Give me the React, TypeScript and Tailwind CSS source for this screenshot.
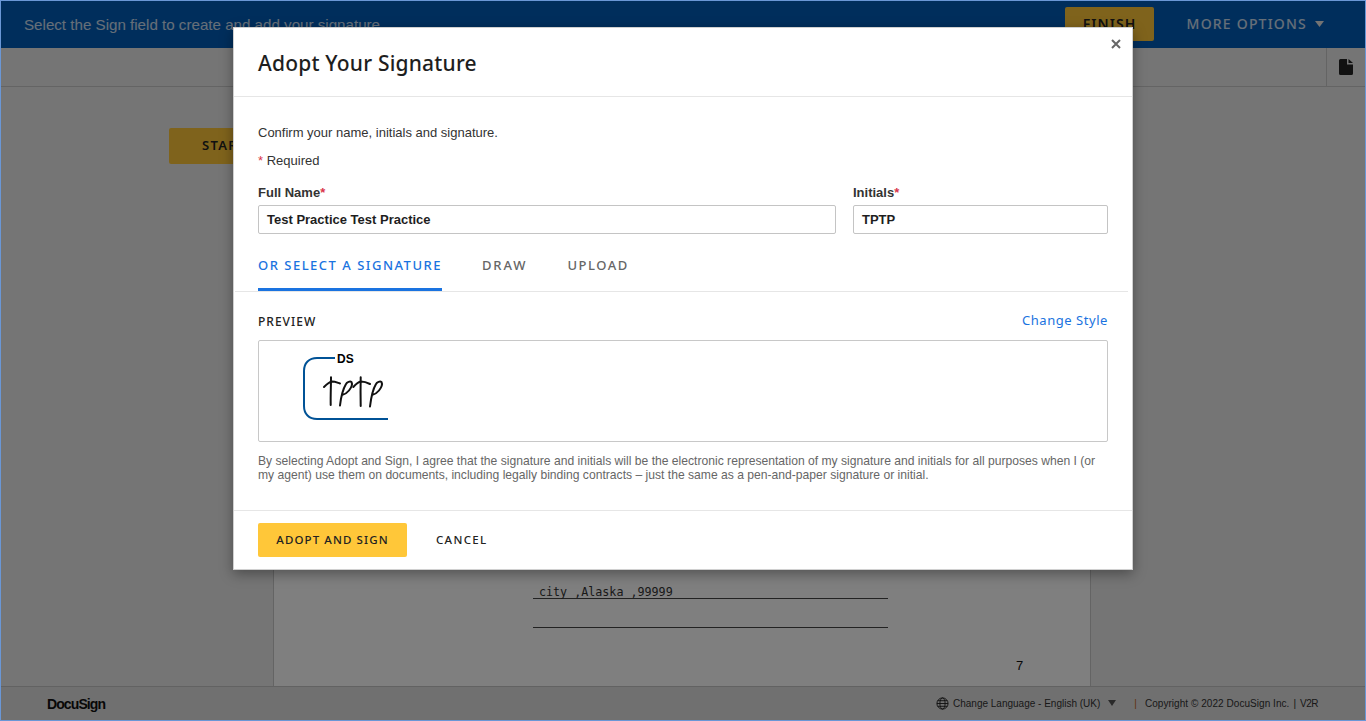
import React from "react";

const sans = "font-['Liberation_Sans',Arial,sans-serif]";
const brand = "font-['Noto_Sans',Lato,sans-serif]";

function Backdrop() {
  return (
    <div className={`flex h-[721px] w-[1366px] flex-col overflow-hidden bg-[#ebebeb] ${sans}`}>
      <header className="flex h-[48px] shrink-0 items-center bg-[#005cb9] pl-[24px] pr-[42px]">
        <span className="pt-[2px] text-[15.150px] text-white/80">Select the Sign field to create and add your signature</span>
        <div className="ml-auto flex items-center">
          <button className={`flex h-[34px] w-[89px] items-center justify-center rounded-[2px] bg-[#ffc739] pb-[2px] pl-[1px] text-[14px] font-semibold tracking-[1.100px] text-[#222] ${brand}`}>FINISH</button>
          <span className={`ml-[33px] pb-[2px] text-[14px] font-medium tracking-[1.200px] text-white/80 ${brand}`}>MORE OPTIONS</span>
          <svg className="ml-[8px]" width="9" height="6" viewBox="0 0 9 6"><path d="M0 0h9L4.500 6z" fill="#e6e6e6" /></svg>
        </div>
      </header>
      <div className="flex h-[39px] shrink-0 justify-end border-b border-[#c8c8c8]">
        <div className="flex w-[40px] items-start justify-start border-l border-[#c8c8c8] pl-[12px] pt-[11px]">
          <svg width="14" height="16" viewBox="0 0 14 16"><path d="M1.500 0H8v5.500h6V14.500a1.500 1.500 0 0 1-1.500 1.500h-11A1.500 1.500 0 0 1 0 14.500v-13A1.500 1.500 0 0 1 1.500 0zM9.500 0 14 4H9.500z" fill="#222" /></svg>
        </div>
      </div>
      <main className="flex min-h-0 flex-1">
        <div className="w-[273px] shrink-0 pl-[169px] pt-[41px]">
          <button className={`h-[36px] w-[120px] rounded-[2px] bg-[#ffc739] pl-[33px] text-left text-[13px] font-semibold tracking-[1.3px] text-[#222] ${brand}`}>START</button>
        </div>
        <section className="flex w-[818px] shrink-0 flex-col justify-end border-x border-[#c8c8c8] bg-white pb-[12px] pl-[259px] pr-[202px]">
          <div className="flex h-[19px] items-end border-b border-[#444] pl-[6px] font-['DejaVu_Sans_Mono',monospace] text-[11.700px] leading-[12px] text-[#333]">city ,Alaska ,99999</div>
          <div className="mt-[28px] border-b border-[#444]" />
          <div className="ml-[483px] mt-[30px] w-[10px] text-[13px] leading-[16px] text-[#111]">7</div>
        </section>
      </main>
      <footer className="flex h-[35px] shrink-0 items-center border-t border-[#c4c4c4] bg-[#e0e0e0] pl-[47px] pr-[48px] text-[#333]">
        <span className="text-[14px] font-bold tracking-[-0.900px] text-[#111]">DocuSign</span>
        <div className="ml-auto flex items-center pb-[2px] text-[10px]">
          <svg width="13" height="13" viewBox="0 0 14 14" fill="none" stroke="#222" strokeWidth="1"><circle cx="7" cy="7" r="6" /><ellipse cx="7" cy="7" rx="2.800" ry="6" /><path d="M1 7h12M1.800 4h10.400M1.800 10h10.400" /></svg>
          <span className="ml-[4px]">Change Language - English (UK)</span>
          <svg className="ml-[8px]" width="8" height="6" viewBox="0 0 8 6"><path d="M0 0h8L4 6z" fill="#555" /></svg>
          <span className="ml-[18px] text-[#c0651a]">|</span>
          <span className="ml-[8px] tracking-[0.050px]">Copyright © 2022 DocuSign Inc.</span>
          <span className="ml-[4px]">|</span>
          <span className="ml-[4px] tracking-[-0.500px]">V2R</span>
        </div>
      </footer>
    </div>
  );
}

function Signature() {
  return (
    <div className="relative h-[70px] w-[90px]">
      <svg className="absolute left-0 top-0" width="90" height="70" viewBox="0 0 90 70" fill="none">
        <path d="M32 1H14C6 1 1 6 1 14V49C1 57 6 62 14 62H85" stroke="#005296" strokeWidth="2" />
        <g stroke="#111" strokeWidth="2" strokeLinecap="round" strokeLinejoin="round">
          <path d="M21 30C24 27 26 25 29 24.500 32 24.500 34 25.500 37 26.500" />
          <path d="M28 20.300C28 29 27.500 38 27.700 48" />
          <path d="M37 48.500C38 40 40 32 43 27 44 25 47 24 48.500 25 50 28 48 31 46 33.500 44 36 41.500 37.500 39 38" />
          <path d="M50.300 30C53 27 55 25 58 24.500 61 24.500 64 25.500 67 27" />
          <path d="M57.700 20.300C57.500 30 57.500 39 57.700 49" />
          <path d="M67 49.500C68 41 70 32 73 27 74 25 77 24 78.500 25 80 28 78 31 76 33.500 74 36 71.500 37.500 69 38" />
        </g>
      </svg>
      <span className={`absolute left-[34px] top-[-5px] text-[12px] font-bold leading-[14px] text-black ${sans}`}>DS</span>
    </div>
  );
}

function Modal() {
  return (
    <div className="absolute inset-0 flex justify-center bg-black/50 pt-[27px]">
      <div className={`relative h-[543px] w-[900px] border border-[#d0d0d0] bg-white shadow-[0_4px_12px_rgba(0,0,0,0.35)] ${sans}`}>
        <button aria-label="Close" className="absolute right-[11px] top-[11px] text-[#666]">
          <svg width="10" height="10" viewBox="0 0 10 10" stroke="#666" strokeWidth="2"><path d="M1 1l8 8M9 1l-8 8" /></svg>
        </button>
        <div className="flex h-[69px] items-center border-b border-[#e6e6e6] pl-[24px] pt-[3px]">
          <h1 className={`text-[21px] font-medium tracking-[0.200px] text-[#1e1e1e] ${brand}`}>Adopt Your Signature</h1>
        </div>
        <div className="px-[24px] pt-[28px]">
          <p className="text-[13px] leading-[16px] text-[#333]">Confirm your name, initials and signature.</p>
          <p className="mt-[12px] text-[13px] leading-[16px] text-[#333]"><span className="text-[#d9374b]">*</span> Required</p>
          <div className="mt-[16px] flex gap-[17px]">
            <label className="block w-[578px]">
              <span className="block text-[13px] font-bold leading-[16px] text-[#333]">Full Name<span className="text-[#d9374b]">*</span></span>
              <span className="mt-[4px] flex h-[29px] items-center rounded-[2px] border border-[#c4c4c4] pl-[8px] text-[13px] font-bold text-[#1e1e1e]">Test Practice Test Practice</span>
            </label>
            <label className="block flex-1">
              <span className="block text-[13px] font-bold leading-[16px] text-[#333]">Initials<span className="text-[#d9374b]">*</span></span>
              <span className="mt-[4px] flex h-[29px] items-center rounded-[2px] border border-[#c4c4c4] pl-[8px] text-[13px] font-bold text-[#1e1e1e]">TPTP</span>
            </label>
          </div>
        </div>
        <div className={`ml-[1px] mr-[4px] mt-[15px] flex h-[43px] gap-[40px] border-b border-[#e6e6e6] pl-[23px] text-[13px] font-medium tracking-[1.500px] ${brand}`}>
          <span className="flex h-[42px] items-center border-b-[3px] border-[#1a73e0] pb-[5px] text-[#1a73e0]">OR SELECT A SIGNATURE</span>
          <span className="flex h-[42px] items-center pb-[8px] tracking-[1.900px] text-[#666]">DRAW</span>
          <span className="flex h-[42px] items-center pb-[8px] text-[#666]">UPLOAD</span>
        </div>
        <div className="px-[24px] pt-[21px]">
          <div className="flex items-start justify-between">
            <span className={`text-[12px] font-medium leading-[18px] tracking-[1px] text-[#222] ${brand}`}>PREVIEW</span>
            <span className={`text-[13px] leading-[14px] tracking-[0.550px] text-[#1a73e0] ${brand}`}>Change Style</span>
          </div>
          <div className="mt-[9px] flex h-[102px] rounded-[2px] border border-[#c8c8c8] pl-[44px] pt-[16px]">
            <Signature />
          </div>
          <p className="mt-[12px] text-[12.130px] leading-[14px] text-[#666]">By selecting Adopt and Sign, I agree that the signature and initials will be the electronic representation of my signature and initials for all purposes when I (or my agent) use them on documents, including legally binding contracts – just the same as a pen-and-paper signature or initial.</p>
        </div>
        <div className="absolute inset-x-0 bottom-0 flex h-[59px] items-start border-t border-[#e6e6e6] pl-[24px] pt-[12px]">
          <button className={`h-[34px] w-[149px] rounded-[2px] bg-[#ffc739] text-[11.500px] font-medium tracking-[1.100px] text-[#222] ${brand}`}>ADOPT AND SIGN</button>
          <button className={`ml-[29px] h-[34px] text-[11.500px] font-medium tracking-[1.3px] text-[#222] ${brand}`}>CANCEL</button>
        </div>
      </div>
    </div>
  );
}

export default function App() {
  return (
    <div className="relative h-[721px] w-[1366px] overflow-hidden">
      <Backdrop />
      <Modal />
      <div className="pointer-events-none absolute inset-0 border border-[#6a97d6]" />
    </div>
  );
}
